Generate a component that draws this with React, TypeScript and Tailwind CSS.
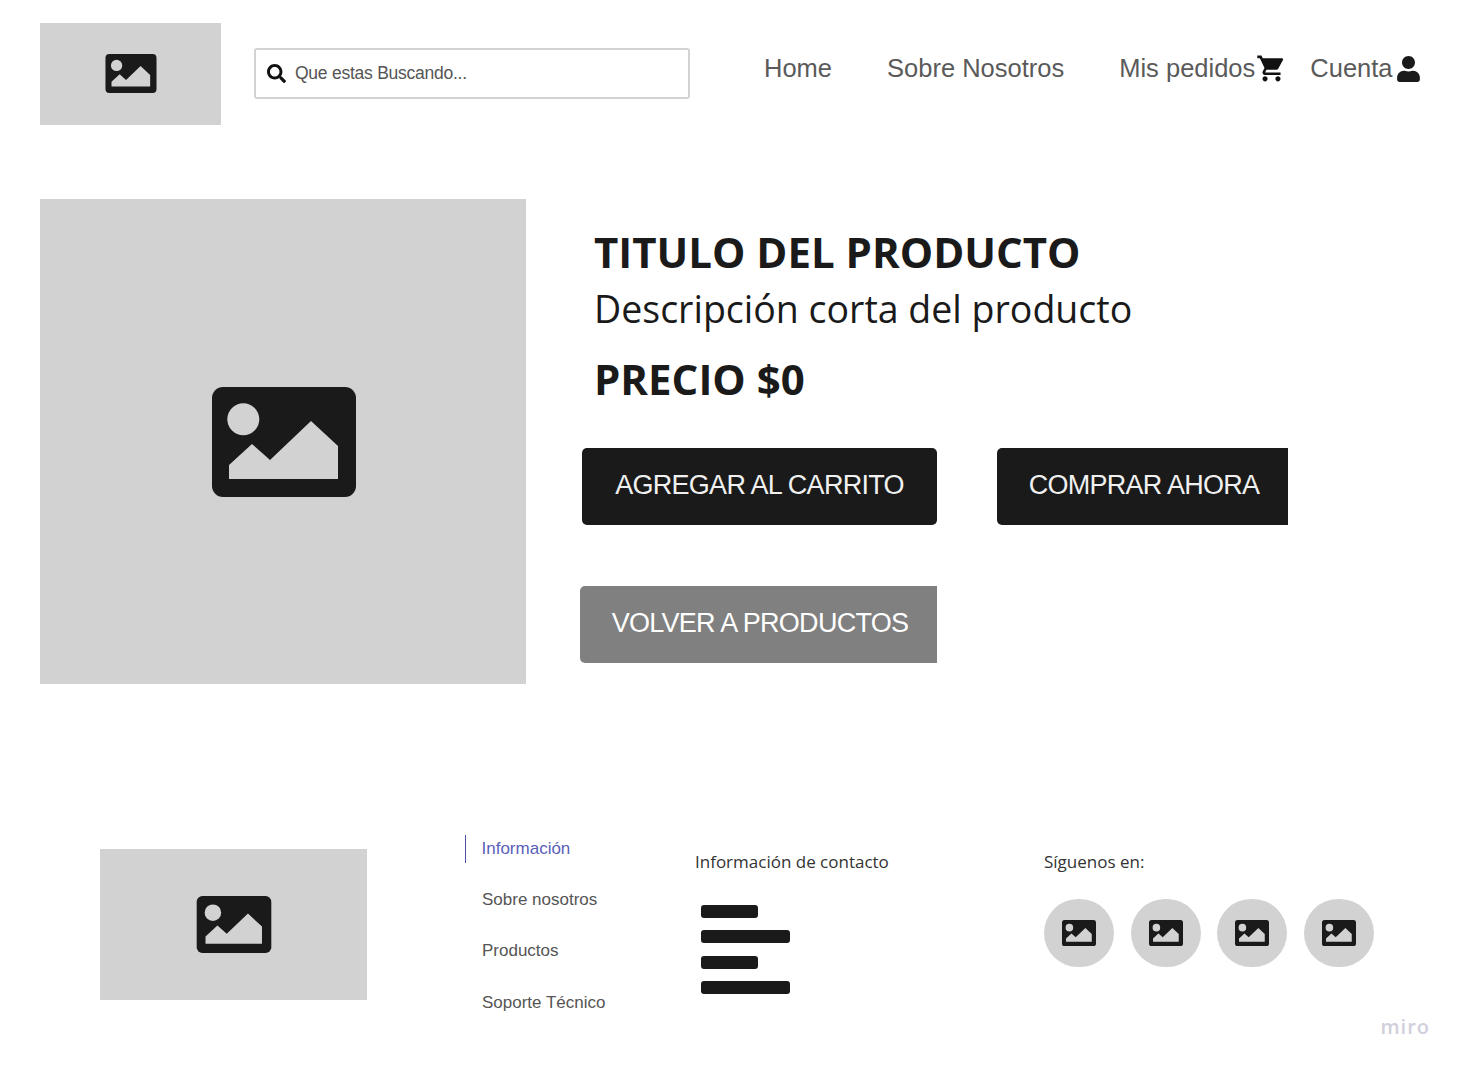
import { FaSearch, FaUser } from "react-icons/fa";
import { MdShoppingCart } from "react-icons/md";

function PictureIcon({ className, fill }: { className: string; fill: string }) {
  return (
    <svg viewBox="0 0 144 110" className={className} aria-hidden="true">
      <rect width="144" height="110" rx="11" fill="#1a1a1a" />
      <circle cx="31.3" cy="32.3" r="16" fill={fill} />
      <path d="M17 92V78L40 57L58 73L99 34L126 59V92Z" fill={fill} />
    </svg>
  );
}

function NavLink({ label, className }: { label: string; className: string }) {
  return <a className={`text-[25.5px] leading-none text-[#5a5a5a] ${className}`}>{label}</a>;
}

function ActionButton({ label, className }: { label: string; className: string }) {
  return (
    <button className={`flex h-[77px] items-center justify-center pb-[2px] text-[27px] tracking-[-0.72px] text-[#f0f0f0] ${className}`}>
      {label}
    </button>
  );
}

export default function App() {
  const sans = "font-['Liberation_Sans',Arial,sans-serif]";
  const open = "font-['Open_Sans',sans-serif]";
  return (
    <div className={`relative h-[1068px] w-[1462px] overflow-hidden bg-white ${sans}`}>
      <header className="flex items-start pl-10 pt-[23px]">
        <div className="flex h-[102px] w-[181px] items-center justify-center bg-[#d2d2d2]">
          <PictureIcon className="ml-px mb-px h-[39px] w-[52px]" fill="#d2d2d2" />
        </div>
        <div className="ml-[33px] mt-[25px] flex h-[51px] w-[436px] items-center rounded-[3px] border-2 border-[#d2d2d2] pl-[11px]">
          <FaSearch className="h-[19px] w-[19px] text-[#111]" />
          <span className="ml-[9px] text-[17.5px] tracking-[-0.25px] text-[#555]">Que estas Buscando...</span>
        </div>
        <nav className="ml-[74px] mt-[30px] flex items-center">
          <NavLink label="Home" className="" />
          <NavLink label="Sobre Nosotros" className="ml-[55px]" />
          <NavLink label="Mis pedidos" className="ml-[55px]" />
          <MdShoppingCart className="ml-px h-[31px] w-[31px] text-[#111]" />
          <NavLink label="Cuenta" className="ml-[23px]" />
          <FaUser className="ml-[4px] h-[26px] w-[23px] text-[#1a1a1a]" />
        </nav>
      </header>

      <main className="mt-[74px] flex pl-10">
        <div className="flex h-[485px] w-[486px] items-center justify-center bg-[#d2d2d2]">
          <PictureIcon className="ml-[2px] h-[110px] w-[144px]" fill="#d2d2d2" />
        </div>
        <div className="ml-[54px] flex flex-col">
          <div className={`ml-[14px] ${open} text-[#1a1a1a]`}>
            <h1 className="mt-[26px] text-[42px] font-bold leading-[54px]">TITULO DEL PRODUCTO</h1>
            <p className="mt-[3px] text-[37.5px] leading-[54px]">Descripción corta del producto</p>
            <p className="mt-[16px] text-[42px] font-bold leading-[54px]">PRECIO $0</p>
          </div>
          <div className="ml-[2px] mt-[42px] flex">
            <ActionButton label="AGREGAR AL CARRITO" className="w-[355px] rounded-[5px] bg-[#1a1a1a]" />
            <ActionButton label="COMPRAR AHORA" className="ml-[60px] w-[291px] rounded-l-[5px] bg-[#1a1a1a] pl-[3px]" />
          </div>
          <ActionButton label="VOLVER A PRODUCTOS" className="mt-[61px] w-[357px] rounded-l-[5px] bg-[#808080] pl-[3px] text-white" />
        </div>
      </main>

      <footer className="mt-[151px] flex pl-[100px]">
        <div className="mt-[14px] flex h-[151px] w-[267px] items-center justify-center bg-[#d2d2d2]">
          <PictureIcon className="h-[57px] w-[76px]" fill="#d2d2d2" />
        </div>
        <ul className="ml-[98px] w-[230px] text-[17px] leading-[28px] text-[#555]">
          <li className="w-[120px] border-l-[1.5px] border-[#4a50a0] pl-[15.5px] text-[#5a60b8]">Información</li>
          <li className="mt-[23px] pl-[17px]">Sobre nosotros</li>
          <li className="mt-[23px] pl-[17px]">Productos</li>
          <li className="mt-[23.5px] pl-[17px]">Soporte Técnico</li>
        </ul>
        <div className={`w-[349px] ${open}`}>
          <p className="mt-[15px] text-[17px] leading-6 text-[#333]">Información de contacto</p>
          <div className="ml-[6px] mt-[31px] flex flex-col gap-[12.33px]">
            <span className="h-[13px] w-[57px] rounded-[3px] bg-[#1a1a1a]" />
            <span className="h-[13px] w-[89px] rounded-[3px] bg-[#1a1a1a]" />
            <span className="h-[13px] w-[57px] rounded-[3px] bg-[#1a1a1a]" />
            <span className="h-[13px] w-[89px] rounded-[3px] bg-[#1a1a1a]" />
          </div>
        </div>
        <div className={open}>
          <p className="mt-[15px] text-[17px] leading-6 text-[#333]">Síguenos en:</p>
          <div className="mt-[25px] flex gap-[16.67px]">
            {[0, 1, 2, 3].map((i) => (
              <div key={i} className="flex h-[68px] w-[70px] items-center justify-center rounded-full bg-[#d2d2d2]">
                <PictureIcon className="h-[26px] w-[34px]" fill="#d2d2d2" />
              </div>
            ))}
          </div>
        </div>
      </footer>

      <span className={`absolute right-[32px] top-[1012px] ${open} text-[20px] font-semibold tracking-[1px] text-[#d0d0dc]`}>miro</span>
    </div>
  );
}
